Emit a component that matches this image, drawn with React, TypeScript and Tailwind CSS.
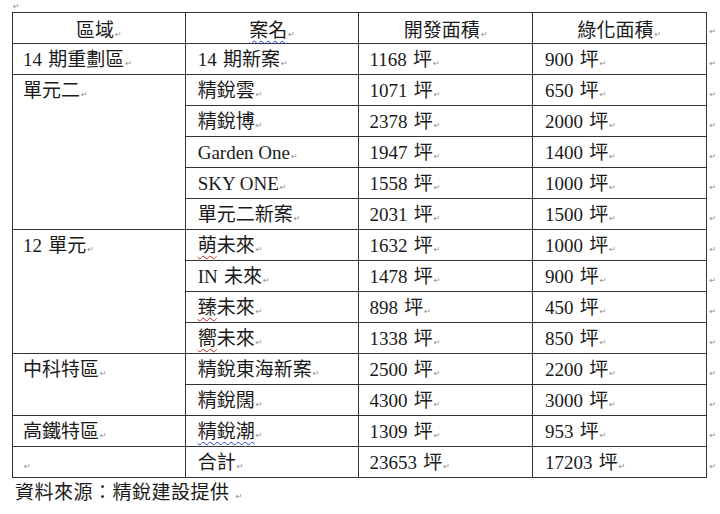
import React from "react"

type Row = {
  area?: string
  span?: number
  name: string
  mark?: "red" | "blue"
  dev: string
  green: string
}

const rows: Row[] = [
  { area: "14\u2004期重劃區", span: 1, name: "14\u2004期新案", dev: "1168", green: "900" },
  { area: "單元二", span: 5, name: "精銳雲", dev: "1071", green: "650" },
  { name: "精銳博", dev: "2378", green: "2000" },
  { name: "Garden One", dev: "1947", green: "1400" },
  { name: "SKY ONE", dev: "1558", green: "1000" },
  { name: "單元二新案", dev: "2031", green: "1500" },
  { area: "12\u2004單元", span: 4, name: "萌未來", mark: "red", dev: "1632", green: "1000" },
  { name: "IN\u2004未來", dev: "1478", green: "900" },
  { name: "臻未來", mark: "red", dev: "898", green: "450" },
  { name: "嚮未來", mark: "red", dev: "1338", green: "850" },
  { area: "中科特區", span: 2, name: "精銳東海新案", dev: "2500", green: "2200" },
  { name: "精銳闊", dev: "4300", green: "3000" },
  { area: "高鐵特區", span: 1, name: "精銳潮", mark: "blue", dev: "1309", green: "953" },
  { area: "", span: 1, name: "合計", dev: "23653", green: "17203" },
]

function Ret() {
  return <span className="ml-[1px] text-[8px] leading-none text-[#8a8a8a] font-['DejaVu_Sans',sans-serif]">↵</span>
}

function Name({ row }: { row: Row }) {
  if (row.mark === "red") {
    return (
      <>
        <span className="underline decoration-wavy decoration-[#d02020] decoration-1 underline-offset-[3px]">{row.name[0]}</span>
        {row.name.slice(1)}
      </>
    )
  }
  if (row.mark === "blue") {
    return <span className="underline decoration-wavy decoration-[#2a3fc0] decoration-1 underline-offset-[3px]">{row.name}</span>
  }
  return <>{row.name}</>
}

// fixed-height box inside every cell so the CJK fallback font can't stretch the rows
function Cell({ children, className = "" }: { children: React.ReactNode; className?: string }) {
  return <div className={"h-[30px] px-[10px] pt-[4px] leading-[24px] whitespace-nowrap overflow-visible " + className}>{children}</div>
}

// row-end mark sitting just outside the right border
function RowEnd({ top }: { top: string }) {
  return (
    <td className="p-0 align-top">
      <div className={"h-[30px] pl-[2px] text-[8px] leading-none " + top}>
        <Ret />
      </div>
    </td>
  )
}

const td = "border border-[#333] p-0 align-top"

export default function App() {
  return (
    <div className="min-h-screen bg-white text-[#1a1a1a] font-['Liberation_Serif','Noto_Sans_CJK_TC',serif] text-[19px] leading-[24px]">
      <div className="h-[12px] pl-[12px] overflow-hidden">
        <div className="-mt-[7px] leading-none">
          <Ret />
        </div>
      </div>
      <div className="pl-[12px]">
        <table className="border-collapse table-fixed">
          <colgroup>
            <col className="w-[173px]" />
            <col className="w-[174px]" />
            <col className="w-[174px]" />
            <col className="w-[174px]" />
            <col className="w-[14px]" />
          </colgroup>
          <tbody>
            <tr>
              <td className={td}>
                <Cell className="text-center pt-[6px]">
                  區域<Ret />
                </Cell>
              </td>
              <td className={td}>
                <Cell className="text-center pt-[6px]">
                  <span className="underline decoration-wavy decoration-[#2a3fc0] decoration-1 underline-offset-[3px]">案名</span>
                  <Ret />
                </Cell>
              </td>
              <td className={td}>
                <Cell className="text-center pt-[6px]">
                  開發面積<Ret />
                </Cell>
              </td>
              <td className={td}>
                <Cell className="text-center pt-[6px]">
                  綠化面積<Ret />
                </Cell>
              </td>
              <RowEnd top="pt-[15px]" />
            </tr>
            {rows.map((r, i) => (
              <tr key={i}>
                {r.area !== undefined && (
                  <td rowSpan={r.span} className={td}>
                    <Cell>
                      {r.area}
                      <Ret />
                    </Cell>
                  </td>
                )}
                <td className={td}>
                  <Cell className="pl-[12px]">
                    <Name row={r} />
                    <Ret />
                  </Cell>
                </td>
                <td className={td}>
                  <Cell>
                    {r.dev}
                    {"\u2004"}坪<Ret />
                  </Cell>
                </td>
                <td className={td}>
                  <Cell className="pl-[12px]">
                    {r.green}
                    {"\u2004"}坪<Ret />
                  </Cell>
                </td>
                <RowEnd top="pt-[16px]" />
              </tr>
            ))}
          </tbody>
        </table>
      </div>
      <div className="pl-[15px] pt-[3px] tracking-[0.5px]">
        資料來源：精銳建設提供 <Ret />
      </div>
    </div>
  )
}
